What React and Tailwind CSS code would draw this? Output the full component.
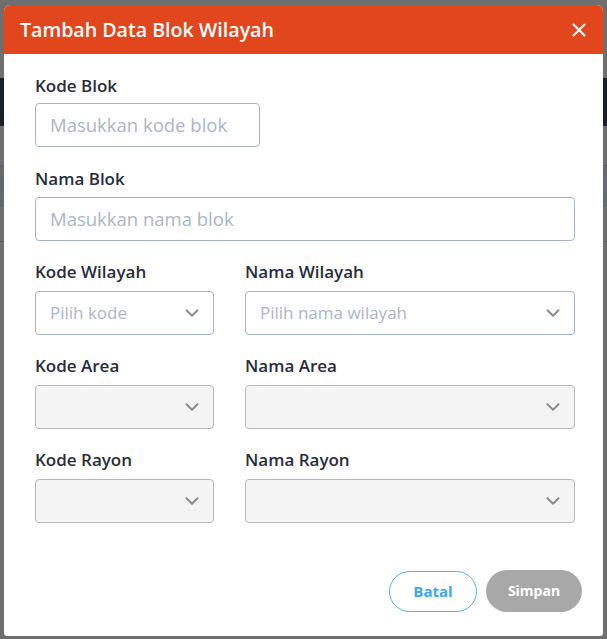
import { ChevronDown, X } from "lucide-react";

const font = { fontFamily: "'Open Sans', 'Noto Sans', sans-serif" };

function Label({ children }) {
  return (
    <div className="text-[17px] font-semibold leading-[22px] text-[#262c43]">
      {children}
    </div>
  );
}

function Select({ placeholder, disabled }) {
  return (
    <div
      className={
        "mt-[8px] flex h-[44px] items-center justify-between rounded-[4px] border pl-[14px] pr-[10px] " +
        (disabled
          ? "border-[#b8b8b8] bg-[#f4f4f4]"
          : "border-[#a3b3cc] bg-white")
      }
    >
      <span className="text-[17px] text-[#a9b6ca]">{placeholder}</span>
      <ChevronDown size={22} strokeWidth={2.2} className="text-[#8c8c8c]" />
    </div>
  );
}

export default function App() {
  return (
    <div className="relative h-[639px] w-[607px] overflow-hidden bg-[#6f6f6f]" style={font}>
      {/* page behind overlay */}
      <div className="flex flex-col">
        <div className="h-[78px]" />
        <div className="h-[48px] bg-[#1b1f26]" />
        <div className="h-[40px] border-b border-[#5d5d5d]" />
        <div className="h-[40px] border-b border-[#5d5d5d] bg-[#666a6e]" />
        <div className="h-[36px] border-b border-[#5d5d5d]" />
      </div>

      <div className="absolute left-[4px] top-[5px] flex h-[631px] w-[599px] flex-col rounded-t-[6px] rounded-b-[3px] bg-white">
        <div className="flex h-[49px] items-center justify-between rounded-t-[6px] bg-[#e2461d] pl-[16px] pr-[13px]">
          <h2 className="text-[19.6px] font-semibold text-white">Tambah Data Blok Wilayah</h2>
          <X size={22} strokeWidth={2.2} className="text-white" />
        </div>

        <div className="flex flex-1 flex-col pl-[31px] pr-[28px] pt-[21px]">
          <Label>Kode Blok</Label>
          <div className="mt-[6px] flex h-[44px] w-[225px] items-center rounded-[4px] border border-[#a3b3cc] pl-[14px]">
            <span className="text-[18.5px] text-[#a9b6ca]">Masukkan kode blok</span>
          </div>

          <div className="mt-[21px]">
            <Label>Nama Blok</Label>
          </div>
          <div className="mt-[7px] flex h-[44px] items-center rounded-[4px] border border-[#a3b3cc] pl-[14px]">
            <span className="text-[18.5px] text-[#a9b6ca]">Masukkan nama blok</span>
          </div>

          <div className="mt-[20px] grid grid-cols-[179px_330px] gap-x-[31px] gap-y-[20px]">
            <div>
              <Label>Kode Wilayah</Label>
              <Select placeholder="Pilih kode" />
            </div>
            <div>
              <Label>Nama Wilayah</Label>
              <Select placeholder="Pilih nama wilayah" />
            </div>
            <div>
              <Label>Kode Area</Label>
              <Select disabled />
            </div>
            <div>
              <Label>Nama Area</Label>
              <Select disabled />
            </div>
            <div>
              <Label>Kode Rayon</Label>
              <Select disabled />
            </div>
            <div>
              <Label>Nama Rayon</Label>
              <Select disabled />
            </div>
          </div>

          <div className="-mr-[7px] mt-[47px] flex items-start justify-end gap-[9px]">
            <button className="mt-[1px] h-[41px] w-[88px] rounded-full border border-[#4db3f5] text-[15px] font-bold text-[#3aa7ef]">
              Batal
            </button>
            <button className="h-[42px] w-[96px] rounded-full bg-[#a8a8a8] pb-[2px] text-[14px] font-bold text-white">
              Simpan
            </button>
          </div>
        </div>
      </div>
    </div>
  );
}
